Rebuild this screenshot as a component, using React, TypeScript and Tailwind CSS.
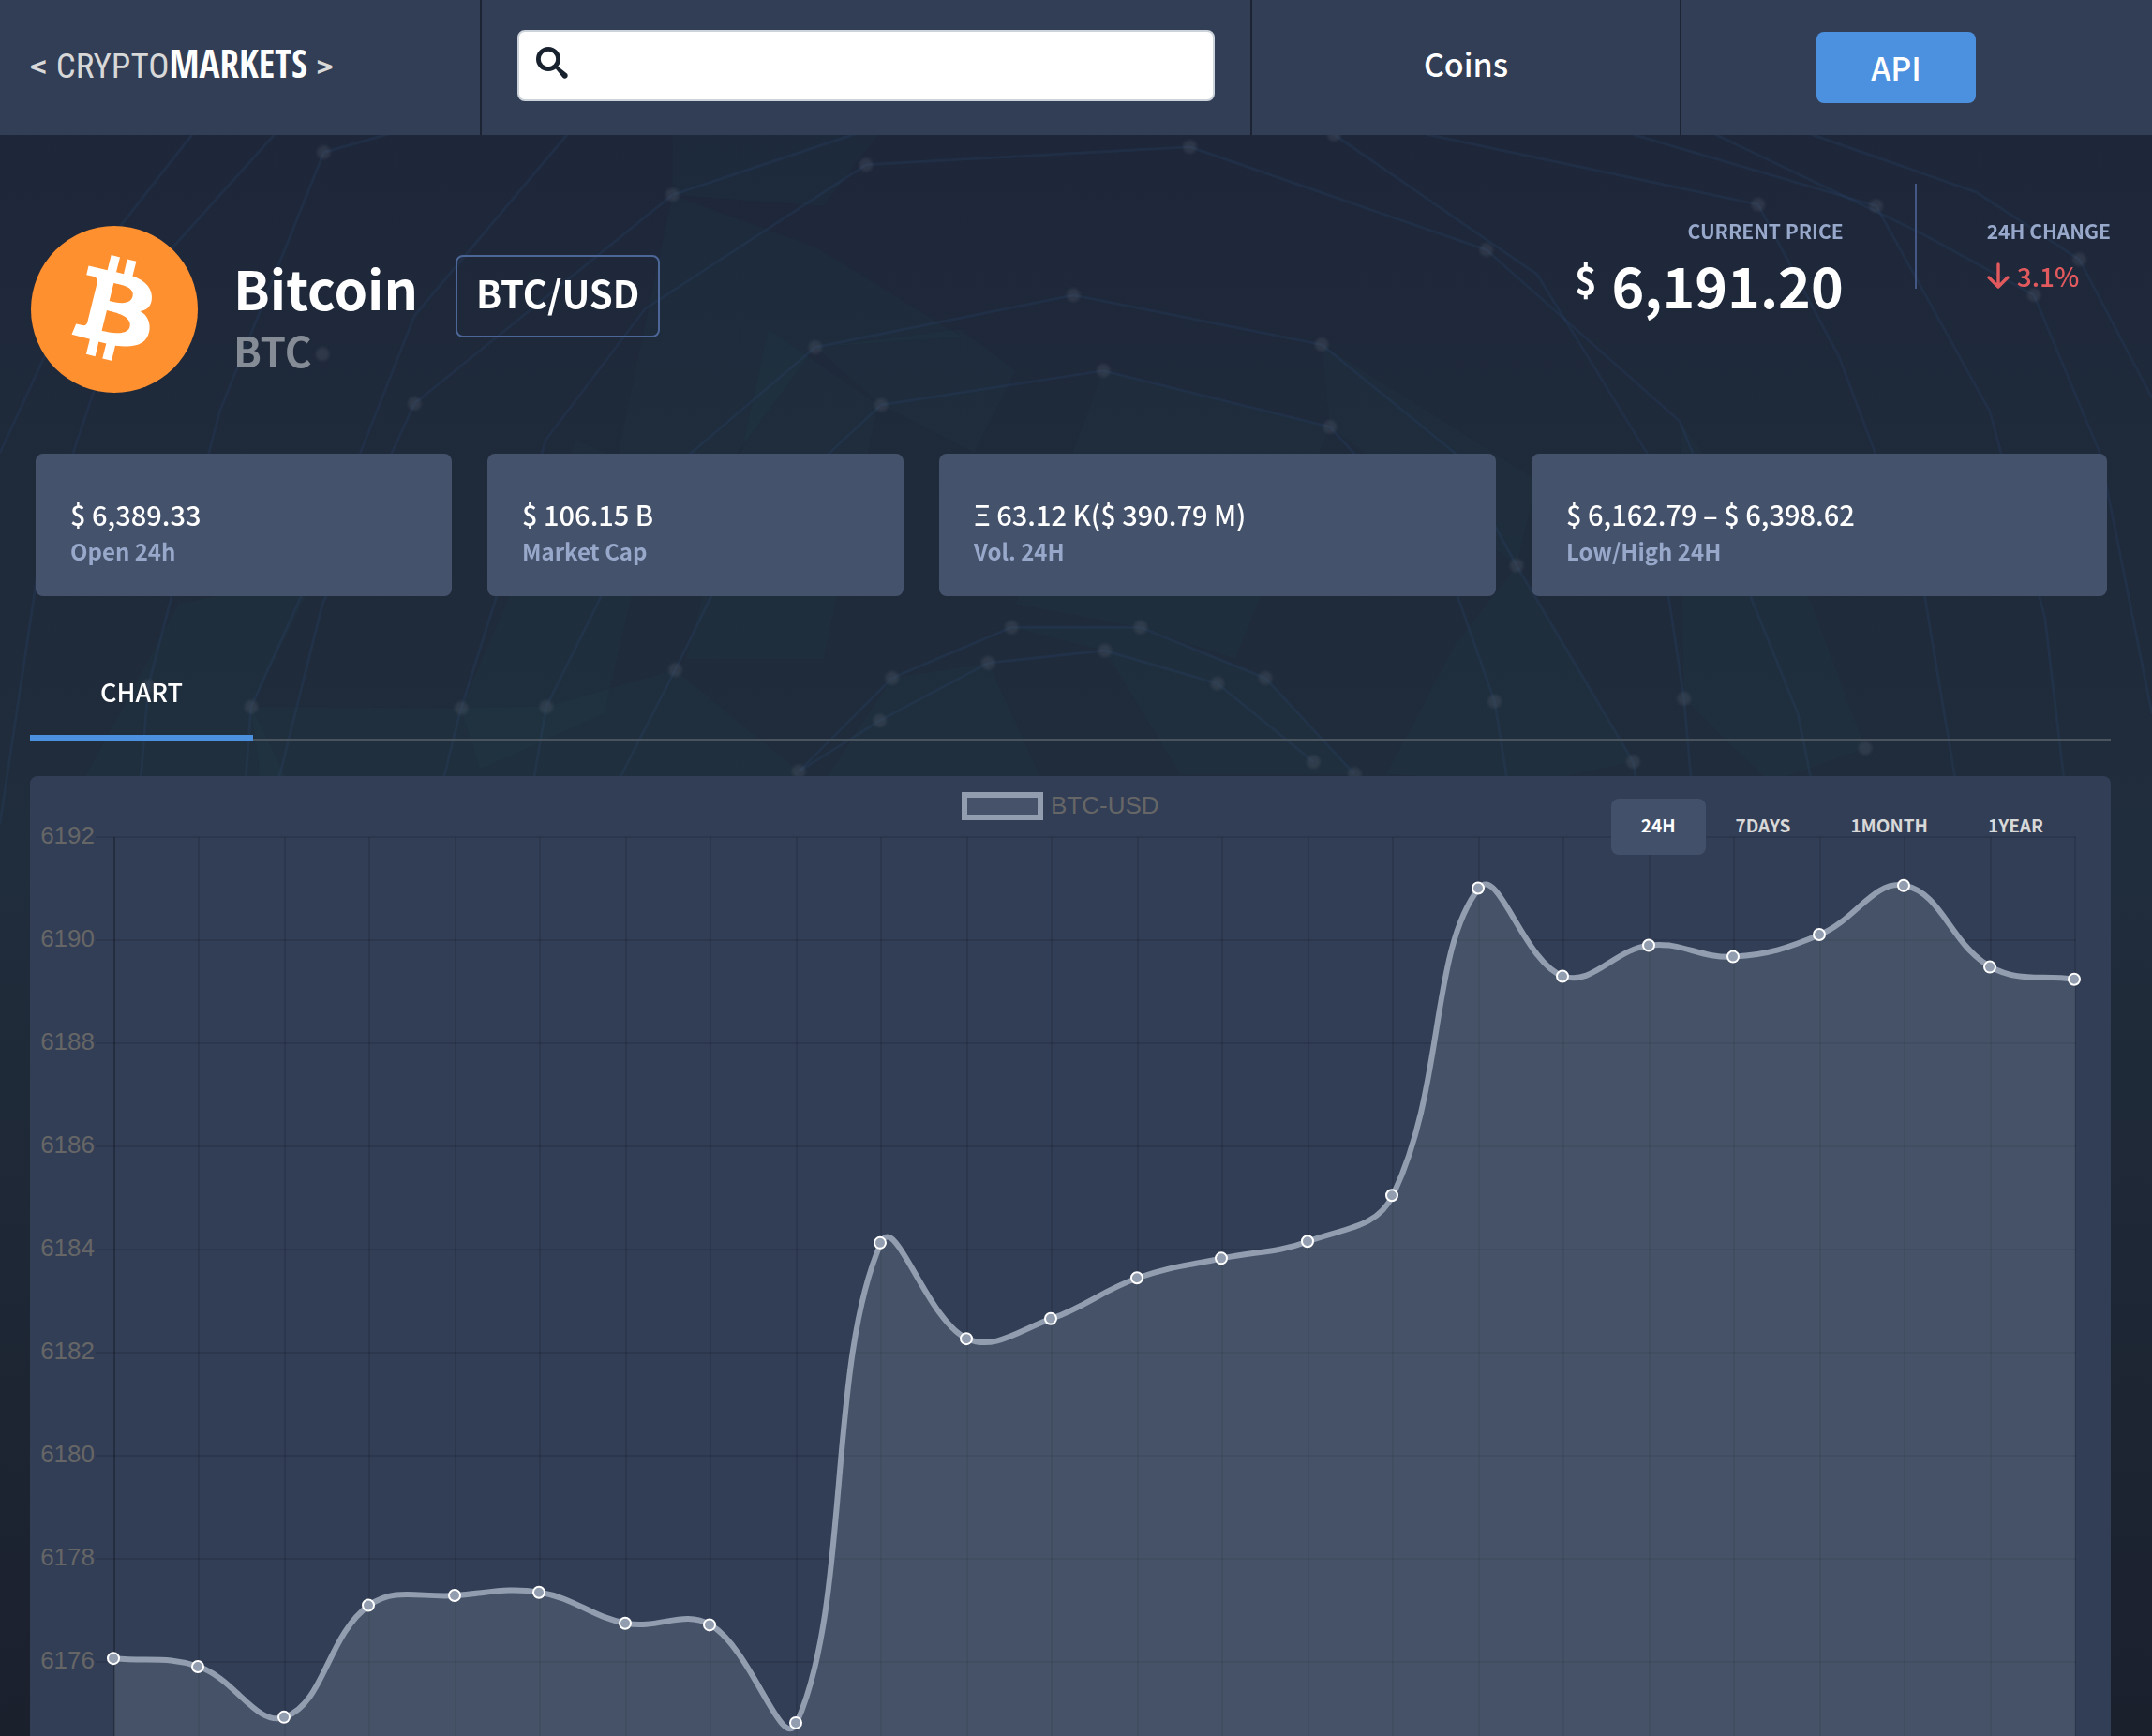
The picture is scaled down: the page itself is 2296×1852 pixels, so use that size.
import React, { useState } from 'react';

interface Stat {
  value: string;
  label: string;
}

const stats: Stat[] = [
  { value: '$ 6,389.33', label: 'Open 24h' },
  { value: '$ 106.15 B', label: 'Market Cap' },
  { value: 'Ξ 63.12 K($ 390.79 M)', label: 'Vol. 24H' },
  { value: '$ 6,162.79 – $ 6,398.62', label: 'Low/High 24H' },
];

const ranges = ['24H', '7DAYS', '1MONTH', '1YEAR'];

const prices = [
  6176.07, 6175.91, 6174.93, 6177.1, 6177.29, 6177.35, 6176.75, 6176.72,
  6174.82, 6184.13, 6182.27, 6182.66, 6183.45, 6183.83, 6184.16, 6185.05,
  6191.01, 6189.3, 6189.9, 6189.68, 6190.11, 6191.06, 6189.48, 6189.24,
];

const ticks = [6192, 6190, 6188, 6186, 6184, 6182, 6180, 6178, 6176];

// chart geometry, in viewBox units
const LEFT = 90;
const RIGHT = 2182;
const TOP = 65;
const UNIT = 55;
const BOTTOM = TOP + UNIT * 18;

const xAt = (i: number) =>
  Math.round((LEFT + ((RIGHT - LEFT) * i) / (prices.length - 1)) / 2) * 2;
const yAt = (price: number) => TOP + (6192 - price) * UNIT;

const points = prices.map((price, i) => ({ x: xAt(i), y: yAt(price) }));

// smooth curve through the points, tension 0.4
const handles = points.map((cur, i) => {
  const prev = points[i - 1] || cur;
  const next = points[i + 1] || cur;
  const d01 = Math.hypot(cur.x - prev.x, cur.y - prev.y);
  const d12 = Math.hypot(next.x - cur.x, next.y - cur.y);
  const fa = (0.4 * d01) / (d01 + d12);
  const fb = (0.4 * d12) / (d01 + d12);
  return {
    inX: cur.x - fa * (next.x - prev.x),
    inY: cur.y - fa * (next.y - prev.y),
    outX: cur.x + fb * (next.x - prev.x),
    outY: cur.y + fb * (next.y - prev.y),
  };
});

const linePath = points
  .map((p, i) => {
    if (i === 0) return `M${p.x} ${p.y}`;
    const a = handles[i - 1];
    const b = handles[i];
    return `C${a.outX} ${a.outY} ${b.inX} ${b.inY} ${p.x} ${p.y}`;
  })
  .join(' ');

const areaPath = `${linePath} L${RIGHT} ${BOTTOM} L${LEFT} ${BOTTOM} Z`;

const nodes = [
  [236, 111], [490, 142], [631, 120], [867, 107], [972, 98], [782, 215],
  [594, 253], [804, 270], [642, 295], [302, 294], [963, 251], [969, 311],
  [1083, 182], [1281, 149], [1367, 150], [1482, 215], [1515, 189], [737, 457],
  [831, 457], [720, 483], [805, 474], [650, 494], [641, 525], [887, 498],
  [922, 494], [492, 488], [398, 515], [336, 516], [183, 515], [1105, 412],
  [1089, 511], [1227, 509], [1190, 555], [1359, 545], [957, 555], [987, 564],
  [582, 562], [235, 258], [108, 500],
];

const links = [
  '631,120 867,107 1083,182 1224,307 1310,520 1330,620',
  '490,142 640,92',
  '302,294 490,142',
  '631,120 470,225 398,320 336,516 310,620',
  '782,215 594,253 480,350 398,515 380,620',
  '782,215 963,251 1060,330 1105,412',
  '804,270 642,295 540,390 492,488 450,570',
  '804,270 969,311 1050,400 1089,511 1100,580',
  '972,98 1120,200 1200,330 1227,509 1235,600',
  '1105,412 1190,555 1200,620',
  '420,90 302,230 235,400 183,515 175,620',
  '302,294 235,440 190,620',
  '310,90 236,111 160,300 108,500 100,600',
  '200,98 90,220 30,400 0,600',
  '140,98 60,200 0,330',
  '1040,98 1281,149 1340,260 1400,420 1430,600',
  '1190,98 1367,150 1450,300 1490,450 1510,620',
  '1250,98 1400,170 1482,215 1530,330 1568,520',
  '1320,98 1440,140 1515,189 1568,290',
  '582,562 650,494 737,457 831,457 922,494 987,564',
  '582,562 641,525 720,483 805,474 887,498 957,555',
];

const facets = [
  '490,98 640,98 600,150 490,142',
  '490,142 594,180 700,245 594,253 500,380 440,380',
  '594,253 700,240 740,270 710,330 642,295',
  '420,320 480,350 440,520 350,560 336,516',
  '130,440 230,420 183,515 210,570 60,570',
  '737,457 831,457 922,494 987,564 860,564 805,474',
  '650,494 720,483 760,570 600,570',
  '1105,412 1190,555 1120,570 1010,564 1060,470',
  '1224,307 1320,440 1359,545 1290,570 1227,509',
  '963,251 1120,350 1105,412 969,311',
  '183,515 336,516 398,515 492,488 582,562 560,640 200,640',
  '560,240 640,295 600,480 500,480 540,330',
  '804,270 969,311 900,480 830,457 740,440',
];

const NetworkBackdrop: React.FunctionComponent = () => {
  return (
    <svg
      className="absolute inset-0 h-full w-full"
      viewBox="0 0 1568 1265"
      preserveAspectRatio="xMidYMin slice"
      aria-hidden="true"
    >
      {facets.map((f) => (
        <polygon key={f} points={f} fill="#2a5a5e" opacity="0.08" />
      ))}
      {links.map((l) => (
        <polyline
          key={l}
          points={l}
          fill="none"
          stroke="#2b4a7a"
          strokeWidth="2"
          opacity="0.2"
        />
      ))}
      <g className="blur-[1px]">
        {nodes.map(([x, y]) => (
          <circle key={`${x}-${y}`} cx={x} cy={y} r="5" fill="#5c6673" opacity="0.26" />
        ))}
      </g>
    </svg>
  );
};

const BitcoinLogo: React.FunctionComponent = () => {
  return (
    <svg className="h-[178px] w-[178px] shrink-0" viewBox="40 34 532 532" role="img" aria-label="Bitcoin">
      <circle cx="306" cy="300" r="266" fill="#ff9030" />
      <path
        fill="#fff"
        fillRule="evenodd"
        d="M224 161L284 175L296 127L324 134L312 181L336 187L347 140L376 147L364 194C405 208 430 235 425 270C422 292 408 303 388 306C412 318 423 345 417 372C408 412 372 424 309 416L297 464L268 457L280 409L256 403L245 450L216 443L228 395L170 380L184 346L205 351C213 353 218 348 220 342L252 212C253 204 249 198 238 195L217 190ZM304 216L290 273C312 278 355 290 364 260C374 228 326 221 304 216ZM282 303L266 368C290 374 345 386 355 357C365 322 310 310 282 303Z"
      />
    </svg>
  );
};

const Header: React.FunctionComponent = () => {
  return (
    <header className="relative grid h-36 grid-cols-[514fr_822fr_458fr_502fr] bg-[#323e56]">
      <div className="flex items-center border-r-2 border-[#1c2433] pb-2 pl-8">
        <a href="#" className="flex items-baseline whitespace-nowrap text-[#d8d8d8]">
          <span className="mr-2.5 text-[30px] leading-none font-bold">&lt;</span>
          <span className="font-['Roboto_Condensed',sans-serif] text-[37px] leading-none">
            CRYPTO
          </span>
          <span className="font-['Open_Sans_Condensed','Roboto_Condensed',sans-serif] text-[41px] leading-none font-bold text-white">
            MARKETS
          </span>
          <span className="ml-2.5 text-[30px] leading-none font-bold">&gt;</span>
        </a>
      </div>
      <div className="flex items-center border-r-2 border-[#1c2433] px-[38px] pb-1">
        <div className="relative w-full">
          <input
            type="text"
            aria-label="Search coins"
            className="block h-[76px] w-full rounded-lg border-2 border-[#ccd3da] bg-white pr-4 pl-16 text-[28px] text-[#1c2433]"
          />
          <svg className="absolute top-[18px] left-5 h-[34px] w-[34px]" viewBox="0 0 34 34" aria-hidden="true">
            <circle cx="13" cy="13" r="10.6" fill="none" stroke="#18222e" strokeWidth="4.8" />
            <path
              fill="#18222e"
              d="M20 22.2L22.200 20L32.800 28.400C34 29.600 34 31.400 32.900 32.700C31.600 34 29.600 34 28.400 32.800Z"
            />
          </svg>
        </div>
      </div>
      <div className="flex items-center justify-center border-r-2 border-[#1c2433] pb-[10px]">
        <a href="#" className="text-[34px] font-medium text-white">
          Coins
        </a>
      </div>
      <div className="flex items-center justify-center pr-11">
        <button className="h-[76px] w-[170px] rounded-lg bg-[#4c91df] pb-[2px] text-[34px] font-medium text-white">
          API
        </button>
      </div>
    </header>
  );
};

const CoinSummary: React.FunctionComponent = () => {
  return (
    <section className="flex items-start justify-between pr-11 pb-[65px] pl-[33px]">
      <div className="flex items-start pt-[97px]">
        <BitcoinLogo />
        <div className="mt-[33px] ml-[38px]">
          <h1 className="text-[57px] leading-[64px] font-bold text-white">Bitcoin</h1>
          <p className="text-[44px] leading-[70px] font-bold text-[#868c96]">BTC</p>
        </div>
        <span className="mt-[31px] ml-10 rounded-lg border-2 border-[#4d6698] px-5 pt-2 pb-4 text-[40px] leading-[60px] font-bold text-white">
          BTC/USD
        </span>
      </div>
      <div className="flex pt-[52px]">
        <div className="mt-[34px] mr-[76px] text-right">
          <p className="text-[21px] leading-8 font-bold text-[#97a8cb]">CURRENT PRICE</p>
          <p className="flex justify-end gap-4 font-bold text-white">
            <span className="text-[40px] leading-[70px]">$</span>
            <span className="text-[59px] leading-[84px]">6,191.20</span>
          </p>
        </div>
        <div className="h-28 w-[2px] bg-[#455785]" />
        <div className="mt-[34px] ml-[75px]">
          <p className="text-[21px] leading-8 font-bold text-[#97a8cb]">24H CHANGE</p>
          <p className="flex items-center gap-2 text-[28px] leading-[64px] font-medium text-[#e35a5e]">
            <svg
              className="h-7 w-6"
              viewBox="0 0 24 28"
              fill="none"
              stroke="currentColor"
              strokeWidth="3.4"
              strokeLinecap="round"
              strokeLinejoin="round"
              aria-hidden="true"
            >
              <path d="M12 2V25M2 16L12 26L22 16" />
            </svg>
            3.1%
          </p>
        </div>
      </div>
    </section>
  );
};

const StatCards: React.FunctionComponent = () => {
  return (
    <section className="grid grid-cols-[444fr_444fr_594fr_614fr] gap-[38px] pr-12 pl-[38px]">
      {stats.map((stat) => (
        <div key={stat.label} className="rounded-lg bg-[#45526b] px-[37px] pt-11 pb-7">
          <p className="text-[29px] leading-10 font-medium text-white">{stat.value}</p>
          <p className="text-[24px] leading-10 font-bold text-[#97a8cb]">{stat.label}</p>
        </div>
      ))}
    </section>
  );
};

const PriceChart: React.FunctionComponent = () => {
  return (
    <svg className="block w-full" viewBox={`0 0 2220 ${BOTTOM + 60}`} role="img" aria-label="BTC-USD price">
      {ticks.map((tick) => (
        <rect key={tick} x={LEFT - 20} y={yAt(tick) - 1} width={RIGHT - LEFT + 21} height="2" fill="#000" opacity="0.1" />
      ))}
      {points.map((p, i) => (
        <rect
          key={p.x}
          x={p.x - 1}
          y={TOP}
          width="2"
          height={BOTTOM - TOP + 20}
          fill="#000"
          opacity={i === 0 ? 0.25 : 0.1}
        />
      ))}
      <path d={areaPath} fill="#93a2ad" fillOpacity="0.21" />
      <path d={linePath} fill="none" stroke="#929eb0" strokeWidth="6" strokeLinejoin="round" />
      {points.map((p) => (
        <circle key={p.x} cx={p.x - 1} cy={p.y} r="6" fill="#929eb0" stroke="#fff" strokeWidth="2" />
      ))}
      {ticks.map((tick) => (
        <text
          key={tick}
          x={LEFT - 21}
          y={yAt(tick) + 7}
          textAnchor="end"
          fill="#666"
          className="font-['Liberation_Sans',sans-serif] text-[26px]"
        >
          {tick}
        </text>
      ))}
      <rect x="997" y="20" width="81" height="24" fill="#45526a" stroke="#929eb0" strokeWidth="6" />
      <text x="1089" y="40" fill="#666" className="font-['Liberation_Sans',sans-serif] text-[26px]">
        BTC-USD
      </text>
    </svg>
  );
};

const App: React.FunctionComponent = () => {
  const [range, setRange] = useState('24H');

  return (
    <div className="relative h-screen overflow-hidden bg-linear-to-b from-[#1d2639] via-[#202d3c] to-[#1b202d] font-['Noto_Sans_CJK_SC',sans-serif]">
      <NetworkBackdrop />
      <Header />
      <main className="relative">
        <CoinSummary />
        <StatCards />
        <nav className="mt-[82px] mr-11 ml-8 flex border-b-2 border-[#4a545f]">
          <button className="-mb-[2px] border-b-[6px] border-[#4c91df] px-[75px] pb-[26px] text-[27px] leading-10 font-medium text-white">
            CHART
          </button>
        </nav>
        <section className="relative mt-[38px] mr-11 ml-8 rounded-lg bg-[#323e56]">
          <PriceChart />
          <div className="absolute top-6 right-10 flex">
            {ranges.map((r) => (
              <button
                key={r}
                onClick={() => setRange(r)}
                className={`rounded-lg px-8 pt-2 pb-3 text-[19px] leading-10 font-bold ${
                  r === range ? 'bg-[#435069] text-white' : 'text-[#d8d8d8]'
                }`}
              >
                {r}
              </button>
            ))}
          </div>
        </section>
      </main>
    </div>
  );
};

export default App;
